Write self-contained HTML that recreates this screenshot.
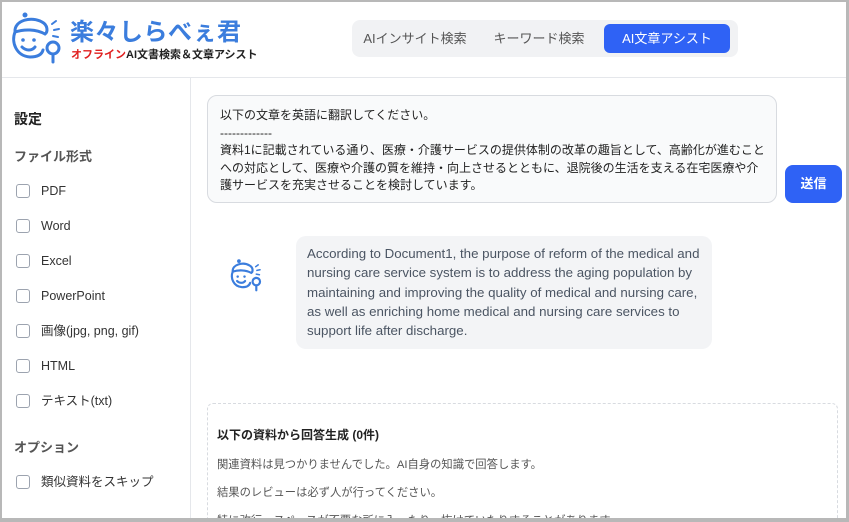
<!DOCTYPE html>
<html style="overflow:hidden;width:849px;height:522px"><head><meta charset="utf-8"><style>
*{box-sizing:border-box;margin:0;padding:0}
body{width:849px;height:522px;overflow:hidden;background:#fff;font-family:"Liberation Sans","Noto Sans CJK JP",sans-serif;position:relative;color:#222}
.frame{position:absolute;left:0;top:0;width:849px;height:522px;border:2px solid #b8b8b8;border-right-width:3px;border-bottom-width:4px;pointer-events:none;z-index:10}
.hdr{position:absolute;left:0;top:0;width:849px;height:78px;border-bottom:1px solid #e5e7eb}
.side{position:absolute;left:0;top:78px;width:191px;height:444px;border-right:1px solid #e5e7eb}
.abs{position:absolute;white-space:nowrap}
.tabs{position:absolute;left:352px;top:20px;width:386px;height:37px;background:#f1f2f4;border-radius:8px}
.tab{position:absolute;top:4px;height:29px;line-height:29px;font-size:13px;color:#555;text-align:center}
.cb{position:absolute;left:16px;width:14px;height:14px;border:1px solid #9ca3af;border-radius:3px;background:#fff}
.lbl{position:absolute;left:41px;font-size:12.5px;line-height:14px;height:14px;color:#333}
</style></head><body>
<div class="hdr"></div>
<svg class="abs" style="left:10px;top:10px" width="56" height="58" viewBox="0 0 56 58" fill="none" stroke="#3b7ddd" stroke-width="3" stroke-linecap="round">
<circle cx="15" cy="5" r="2.5" fill="#3b7ddd" stroke="none"/>
<path d="M5 22 C4 10 22 6 32 12 C38 15 38 22 35 24 C26 19 14 19 5 22Z"/>
<path d="M5 22 C1 32 6 46 20 47 C28 47 32 44 33 40"/>
<circle cx="13" cy="30" r="1.8" fill="#3b7ddd" stroke="none"/><circle cx="24" cy="30" r="1.8" fill="#3b7ddd" stroke="none"/>
<path d="M12 37 C16 41 22 41 25 37"/>
<circle cx="43" cy="38" r="6"/><path d="M43 44 L43 52"/>
<path d="M42 14 L46 11 M44 20 L49 19 M43 26 L48 27" stroke-width="2"/>
</svg>
<div class="abs" style="left:70px;top:12px;font-size:24px;font-weight:bold;color:#3b7ddd;letter-spacing:0.5px">楽々しらべぇ君</div>
<div class="abs" style="left:71px;top:46px;font-size:11px;font-weight:bold;color:#222"><span style="color:#e02020">オフライン</span>AI文書検索＆文章アシスト</div>
<div class="tabs">
<div class="tab" style="left:4px;width:118px">AIインサイト検索</div>
<div class="tab" style="left:128px;width:118px">キーワード検索</div>
<div class="tab" style="left:252px;width:126px;background:#2f62f5;color:#fff;border-radius:6px">AI文章アシスト</div>
</div>
<div class="side"></div>
<div class="abs" style="left:14px;top:109px;font-size:14px;font-weight:bold">設定</div>
<div class="abs" style="left:14px;top:146px;font-size:13px;font-weight:bold;color:#555">ファイル形式</div>
<div class="cb" style="top:184px"></div><div class="lbl abs" style="top:184px">PDF</div>
<div class="cb" style="top:219px"></div><div class="lbl abs" style="top:219px">Word</div>
<div class="cb" style="top:254px"></div><div class="lbl abs" style="top:254px">Excel</div>
<div class="cb" style="top:289px"></div><div class="lbl abs" style="top:289px">PowerPoint</div>
<div class="cb" style="top:324px"></div><div class="lbl abs" style="top:324px">画像(jpg, png, gif)</div>
<div class="cb" style="top:359px"></div><div class="lbl abs" style="top:359px">HTML</div>
<div class="cb" style="top:394px"></div><div class="lbl abs" style="top:394px">テキスト(txt)</div>
<div class="abs" style="left:14px;top:437px;font-size:13px;font-weight:bold;color:#555">オプション</div>
<div class="cb" style="top:475px"></div><div class="lbl abs" style="top:475px">類似資料をスキップ</div>
<div class="abs" style="left:207px;top:95px;width:570px;height:108px;background:#f9fafb;border:1px solid #d8dbe0;border-radius:10px;padding:11px 6px 0 12px;font-size:12px;line-height:17.5px;color:#222;white-space:normal">以下の文章を英語に翻訳してください。<br>-------------<br>資料1に記載されている通り、医療・介護サービスの提供体制の改革の趣旨として、高齢化が進むこと<br>への対応として、医療や介護の質を維持・向上させるとともに、退院後の生活を支える在宅医療や介<br>護サービスを充実させることを検討しています。</div>
<div class="abs" style="left:785px;top:165px;width:57px;height:38px;background:#2f62f5;border-radius:8px;color:#fff;font-size:13px;font-weight:bold;text-align:center;line-height:38px">送信</div>
<svg class="abs" style="left:228px;top:258px" width="38" height="36" viewBox="0 0 56 58" fill="none" stroke="#3b7ddd" stroke-width="3.5" stroke-linecap="round">
<circle cx="15" cy="5" r="3" fill="#3b7ddd" stroke="none"/>
<path d="M5 22 C4 10 22 6 32 12 C38 15 38 22 35 24 C26 19 14 19 5 22Z"/>
<path d="M5 22 C1 32 6 46 20 47 C28 47 32 44 33 40"/>
<circle cx="13" cy="30" r="2" fill="#3b7ddd" stroke="none"/><circle cx="24" cy="30" r="2" fill="#3b7ddd" stroke="none"/>
<path d="M12 37 C16 41 22 41 25 37"/>
<circle cx="43" cy="38" r="6"/><path d="M43 44 L43 52"/>
<path d="M42 14 L46 11 M44 20 L49 19 M43 26 L48 27" stroke-width="2.5"/>
</svg>
<div class="abs" style="left:296px;top:236px;width:416px;height:113px;background:#f3f4f6;border-radius:10px;padding:8px 11px;font-size:13.3px;line-height:19.3px;color:#4b5563;white-space:normal">According to Document1, the purpose of reform of the medical and nursing care service system is to address the aging population by maintaining and improving the quality of medical and nursing care, as well as enriching home medical and nursing care services to support life after discharge.</div>
<div class="abs" style="left:207px;top:403px;width:631px;height:119px;border:1px dashed #d8dbe0;border-bottom:none;border-radius:6px 6px 0 0;overflow:hidden"></div>
<div class="abs" style="left:217px;top:426px;font-size:12px;font-weight:bold;color:#222">以下の資料から回答生成 (0件)</div>
<div class="abs" style="left:217px;top:456px;font-size:11.3px;color:#555">関連資料は見つかりませんでした。AI自身の知識で回答します。</div>
<div class="abs" style="left:217px;top:484px;font-size:11.3px;color:#555">結果のレビューは必ず人が行ってください。</div>
<div class="abs" style="left:217px;top:512px;font-size:11.3px;color:#555">特に改行・スペースが不要な所に入ったり、抜けていたりすることがあります。</div>
<div class="frame"></div>
</body></html>
